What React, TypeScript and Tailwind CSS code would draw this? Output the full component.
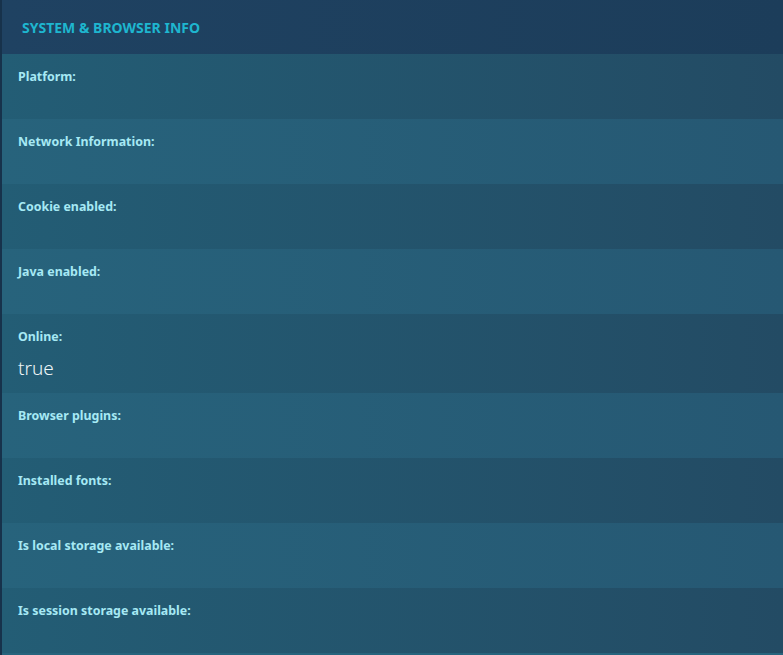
const ROWS: { label: string; value?: string }[] = [
  { label: "Platform:" },
  { label: "Network Information:" },
  { label: "Cookie enabled:" },
  { label: "Java enabled:" },
  { label: "Online:", value: "true" },
  { label: "Browser plugins:" },
  { label: "Installed fonts:" },
  { label: "Is local storage available:" },
  { label: "Is session storage available:" },
];

export default function App() {
  return (
    <div
      className="min-h-screen w-full border-l-2 border-[#17324b] bg-[#1e3f5a]"
      style={{ fontFamily: '"Noto Sans", "Open Sans", sans-serif' }}
    >
      <div className="flex h-[54px] items-center bg-gradient-to-r from-[#1f4262] to-[#1c3d5a] px-5">
        <h2 className="text-[14px] font-bold text-[#1eb6cf]">SYSTEM &amp; BROWSER INFO</h2>
      </div>
      <div className="flex flex-col border-b-2 border-[#27647d]">
        {ROWS.map((row, i) => (
          <div
            key={row.label}
            className={
              i % 2 === 0
                ? "flex min-h-[65px] flex-col bg-gradient-to-r from-[#235d75] to-[#234b64] px-4 pt-[15px] pb-3"
                : "flex min-h-[65px] flex-col bg-gradient-to-r from-[#27637c] to-[#265873] px-4 pt-[15px] pb-3"
            }
          >
            <span className="text-[12.4px] font-bold leading-4 text-[#a6e9f4]">{row.label}</span>
            {row.value && (
              <span className="mt-[11px] pb-px text-[19px] font-light leading-6 text-[#eef6f8]">{row.value}</span>
            )}
          </div>
        ))}
      </div>
    </div>
  );
}
